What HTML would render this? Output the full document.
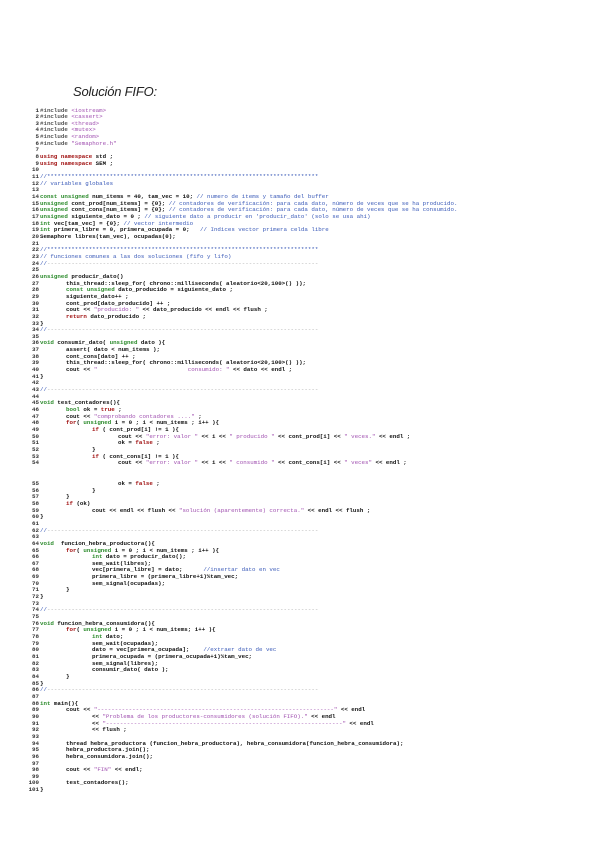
<!DOCTYPE html>
<html><head><meta charset="utf-8"><style>
body{margin:0;background:#fff;width:600px;height:848px;overflow:hidden;position:relative}
h1{position:absolute;left:73px;top:84px;margin:0;font:italic 13px "Liberation Sans",sans-serif;color:#222;letter-spacing:-0.2px}
#code{position:absolute;left:28px;top:107.5px;font:bold 5.8px/6.67px "Liberation Mono",monospace;color:#111;tab-size:26px;-moz-tab-size:26px}
.l{height:6.67px;position:relative;padding-left:12px;white-space:pre}
.n{position:absolute;left:0;width:11px;text-align:right;color:#333}
.k{color:#a01010}.t{color:#2a8a2a}.c{color:#3a5ab8;font-weight:normal}.s{color:#a050b0;font-weight:normal}.p{color:#555}.d{color:#aaa;font-weight:normal}
.gap{height:14px}
</style></head><body>
<h1>Solución FIFO:</h1>
<div id="code">
<div class="l"><span class="n">1</span><span class="p">#include</span> <span class="s">&lt;iostream&gt;</span></div>
<div class="l"><span class="n">2</span><span class="p">#include</span> <span class="s">&lt;cassert&gt;</span></div>
<div class="l"><span class="n">3</span><span class="p">#include</span> <span class="s">&lt;thread&gt;</span></div>
<div class="l"><span class="n">4</span><span class="p">#include</span> <span class="s">&lt;mutex&gt;</span></div>
<div class="l"><span class="n">5</span><span class="p">#include</span> <span class="s">&lt;random&gt;</span></div>
<div class="l"><span class="n">6</span><span class="p">#include</span> <span class="s">"Semaphore.h"</span></div>
<div class="l"><span class="n">7</span></div>
<div class="l"><span class="n">8</span><span class="k">using namespace</span> std ;</div>
<div class="l"><span class="n">9</span><span class="k">using namespace</span> SEM ;</div>
<div class="l"><span class="n">10</span></div>
<div class="l"><span class="n">11</span><span class="c">//******************************************************************************</span></div>
<div class="l"><span class="n">12</span><span class="c">// variables globales</span></div>
<div class="l"><span class="n">13</span></div>
<div class="l"><span class="n">14</span><span class="t">const unsigned</span> num_items = 40, tam_vec = 10; <span class="c">// numero de items y tamaño del buffer</span></div>
<div class="l"><span class="n">15</span><span class="t">unsigned</span> cont_prod[num_items] = {0}; <span class="c">// contadores de verificación: para cada dato, número de veces que se ha producido.</span></div>
<div class="l"><span class="n">16</span><span class="t">unsigned</span> cont_cons[num_items] = {0}; <span class="c">// contadores de verificación: para cada dato, número de veces que se ha consumido.</span></div>
<div class="l"><span class="n">17</span><span class="t">unsigned</span> siguiente_dato = 0 ; <span class="c">// siguiente dato a producir en 'producir_dato' (solo se usa ahí)</span></div>
<div class="l"><span class="n">18</span><span class="t">int</span> vec[tam_vec] = {0}; <span class="c">// vector intermedio</span></div>
<div class="l"><span class="n">19</span><span class="t">int</span> primera_libre = 0, primera_ocupada = 0;   <span class="c">// Indices vector primera celda libre</span></div>
<div class="l"><span class="n">20</span>Semaphore libres(tam_vec), ocupadas(0);</div>
<div class="l"><span class="n">21</span></div>
<div class="l"><span class="n">22</span><span class="c">//******************************************************************************</span></div>
<div class="l"><span class="n">23</span><span class="c">// funciones comunes a las dos soluciones (fifo y lifo)</span></div>
<div class="l"><span class="n">24</span><span class="c">//</span><span class="d">------------------------------------------------------------------------------</span></div>
<div class="l"><span class="n">25</span></div>
<div class="l"><span class="n">26</span><span class="t">unsigned</span> producir_dato()</div>
<div class="l"><span class="n">27</span>	this_thread::sleep_for( chrono::milliseconds( aleatorio&lt;20,100&gt;() ));</div>
<div class="l"><span class="n">28</span>	<span class="t">const unsigned</span> dato_producido = siguiente_dato ;</div>
<div class="l"><span class="n">29</span>	siguiente_dato++ ;</div>
<div class="l"><span class="n">30</span>	cont_prod[dato_producido] ++ ;</div>
<div class="l"><span class="n">31</span>	cout &lt;&lt; <span class="s">"producido: "</span> &lt;&lt; dato_producido &lt;&lt; endl &lt;&lt; flush ;</div>
<div class="l"><span class="n">32</span>	<span class="k">return</span> dato_producido ;</div>
<div class="l"><span class="n">33</span>}</div>
<div class="l"><span class="n">34</span><span class="c">//</span><span class="d">------------------------------------------------------------------------------</span></div>
<div class="l"><span class="n">35</span></div>
<div class="l"><span class="n">36</span><span class="t">void</span> consumir_dato( <span class="t">unsigned</span> dato ){</div>
<div class="l"><span class="n">37</span>	assert( dato &lt; num_items );</div>
<div class="l"><span class="n">38</span>	cont_cons[dato] ++ ;</div>
<div class="l"><span class="n">39</span>	this_thread::sleep_for( chrono::milliseconds( aleatorio&lt;20,100&gt;() ));</div>
<div class="l"><span class="n">40</span>	cout &lt;&lt; <span class="s">"                          consumido: "</span> &lt;&lt; dato &lt;&lt; endl ;</div>
<div class="l"><span class="n">41</span>}</div>
<div class="l"><span class="n">42</span></div>
<div class="l"><span class="n">43</span><span class="c">//</span><span class="d">------------------------------------------------------------------------------</span></div>
<div class="l"><span class="n">44</span></div>
<div class="l"><span class="n">45</span><span class="t">void</span> test_contadores(){</div>
<div class="l"><span class="n">46</span>	<span class="t">bool</span> ok = <span class="k">true</span> ;</div>
<div class="l"><span class="n">47</span>	cout &lt;&lt; <span class="s">"comprobando contadores ...."</span> ;</div>
<div class="l"><span class="n">48</span>	<span class="k">for</span>( <span class="t">unsigned</span> i = 0 ; i &lt; num_items ; i++ ){</div>
<div class="l"><span class="n">49</span>		<span class="k">if</span> ( cont_prod[i] != 1 ){</div>
<div class="l"><span class="n">50</span>			cout &lt;&lt; <span class="s">"error: valor "</span> &lt;&lt; i &lt;&lt; <span class="s">" producido "</span> &lt;&lt; cont_prod[i] &lt;&lt; <span class="s">" veces."</span> &lt;&lt; endl ;</div>
<div class="l"><span class="n">51</span>			ok = <span class="k">false</span> ;</div>
<div class="l"><span class="n">52</span>		}</div>
<div class="l"><span class="n">53</span>		<span class="k">if</span> ( cont_cons[i] != 1 ){</div>
<div class="l"><span class="n">54</span>			cout &lt;&lt; <span class="s">"error: valor "</span> &lt;&lt; i &lt;&lt; <span class="s">" consumido "</span> &lt;&lt; cont_cons[i] &lt;&lt; <span class="s">" veces"</span> &lt;&lt; endl ;</div>
<div class="gap"></div>
<div class="l"><span class="n">55</span>			ok = <span class="k">false</span> ;</div>
<div class="l"><span class="n">56</span>		}</div>
<div class="l"><span class="n">57</span>	}</div>
<div class="l"><span class="n">58</span>	<span class="k">if</span> (ok)</div>
<div class="l"><span class="n">59</span>		cout &lt;&lt; endl &lt;&lt; flush &lt;&lt; <span class="s">"solución (aparentemente) correcta."</span> &lt;&lt; endl &lt;&lt; flush ;</div>
<div class="l"><span class="n">60</span>}</div>
<div class="l"><span class="n">61</span></div>
<div class="l"><span class="n">62</span><span class="c">//</span><span class="d">------------------------------------------------------------------------------</span></div>
<div class="l"><span class="n">63</span></div>
<div class="l"><span class="n">64</span><span class="t">void</span>  funcion_hebra_productora(){</div>
<div class="l"><span class="n">65</span>	<span class="k">for</span>( <span class="t">unsigned</span> i = 0 ; i &lt; num_items ; i++ ){</div>
<div class="l"><span class="n">66</span>		<span class="t">int</span> dato = producir_dato();</div>
<div class="l"><span class="n">67</span>		sem_wait(libres);</div>
<div class="l"><span class="n">68</span>		vec[primera_libre] = dato;      <span class="c">//insertar dato en vec</span></div>
<div class="l"><span class="n">69</span>		primera_libre = (primera_libre+1)%tam_vec;</div>
<div class="l"><span class="n">70</span>		sem_signal(ocupadas);</div>
<div class="l"><span class="n">71</span>	}</div>
<div class="l"><span class="n">72</span>}</div>
<div class="l"><span class="n">73</span></div>
<div class="l"><span class="n">74</span><span class="c">//</span><span class="d">------------------------------------------------------------------------------</span></div>
<div class="l"><span class="n">75</span></div>
<div class="l"><span class="n">76</span><span class="t">void</span> funcion_hebra_consumidora(){</div>
<div class="l"><span class="n">77</span>	<span class="k">for</span>( <span class="t">unsigned</span> i = 0 ; i &lt; num_items; i++ ){</div>
<div class="l"><span class="n">78</span>		<span class="t">int</span> dato;</div>
<div class="l"><span class="n">79</span>		sem_wait(ocupadas);</div>
<div class="l"><span class="n">80</span>		dato = vec[primera_ocupada];    <span class="c">//extraer dato de vec</span></div>
<div class="l"><span class="n">81</span>		primera_ocupada = (primera_ocupada+1)%tam_vec;</div>
<div class="l"><span class="n">82</span>		sem_signal(libres);</div>
<div class="l"><span class="n">83</span>		consumir_dato( dato );</div>
<div class="l"><span class="n">84</span>	}</div>
<div class="l"><span class="n">85</span>}</div>
<div class="l"><span class="n">86</span><span class="c">//</span><span class="d">------------------------------------------------------------------------------</span></div>
<div class="l"><span class="n">87</span></div>
<div class="l"><span class="n">88</span><span class="t">int</span> main(){</div>
<div class="l"><span class="n">89</span>	cout &lt;&lt; <span class="s">"--------------------------------------------------------------------"</span> &lt;&lt; endl</div>
<div class="l"><span class="n">90</span>		&lt;&lt; <span class="s">"Problema de los productores-consumidores (solución FIFO)."</span> &lt;&lt; endl</div>
<div class="l"><span class="n">91</span>		&lt;&lt; <span class="s">"--------------------------------------------------------------------"</span> &lt;&lt; endl</div>
<div class="l"><span class="n">92</span>		&lt;&lt; flush ;</div>
<div class="l"><span class="n">93</span></div>
<div class="l"><span class="n">94</span>	thread hebra_productora (funcion_hebra_productora), hebra_consumidora(funcion_hebra_consumidora);</div>
<div class="l"><span class="n">95</span>	hebra_productora.join();</div>
<div class="l"><span class="n">96</span>	hebra_consumidora.join();</div>
<div class="l"><span class="n">97</span></div>
<div class="l"><span class="n">98</span>	cout &lt;&lt; <span class="s">"FIN"</span> &lt;&lt; endl;</div>
<div class="l"><span class="n">99</span></div>
<div class="l"><span class="n">100</span>	test_contadores();</div>
<div class="l"><span class="n">101</span>}</div>
</div>
</body></html>
